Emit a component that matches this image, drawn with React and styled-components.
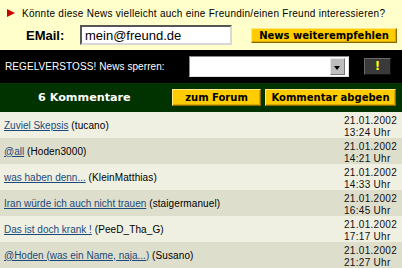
import React from "react";
import styled, { createGlobalStyle } from "styled-components";

const GlobalStyle = createGlobalStyle`
  html, body {
    margin: 0;
    padding: 0;
    background: #efefe2;
  }
  body {
    font-family: "Liberation Sans", Arial, sans-serif;
  }
`;

const comments = [
  { title: "Zuviel Skepsis", author: "tucano", date: "21.01.2002", time: "13:24 Uhr" },
  { title: "@all", author: "Hoden3000", date: "21.01.2002", time: "14:21 Uhr" },
  { title: "was haben denn...", author: "KleinMatthias", date: "21.01.2002", time: "14:33 Uhr" },
  { title: "Iran würde ich auch nicht trauen", author: "staigermanuel", date: "21.01.2002", time: "16:45 Uhr" },
  { title: "Das ist doch krank !", author: "PeeD_Tha_G", date: "21.01.2002", time: "17:17 Uhr" },
  { title: "@Hoden (was ein Name, naja...)", author: "Susano", date: "21.01.2002", time: "21:27 Uhr" },
];

function App() {
  return (
    <>
      <GlobalStyle />
      <Page>
        <Recommend>
          <Question>
            <Arrow />
            Könnte diese News vielleicht auch eine Freundin/einen Freund interessieren?
          </Question>
          <FormRow>
            <Label>EMail:</Label>
            <EmailInput defaultValue="mein@freund.de" />
            <YellowButton $width={146} $height={15}>News weiterempfehlen</YellowButton>
          </FormRow>
        </Recommend>

        <ReportBar>
          <ReportLabel>REGELVERSTOSS! News sperren:</ReportLabel>
          <FakeSelect>
            <SelectArrow />
          </FakeSelect>
          <AlertButton>!</AlertButton>
        </ReportBar>

        <CommentsBar>
          <CommentsTitle>6 Kommentare</CommentsTitle>
          <YellowButton $width={89} $height={17}>zum Forum</YellowButton>
          <YellowButton $width={131} $height={17}>Kommentar abgeben</YellowButton>
        </CommentsBar>

        <List>
          {comments.map((c, i) => (
            <Row key={i} $alt={i % 2 === 1}>
              <RowText>
                <TitleLink href="#">{c.title}</TitleLink> ({c.author})
              </RowText>
              <Stamp>
                <div>{c.date}</div>
                <div>{c.time}</div>
              </Stamp>
            </Row>
          ))}
        </List>
      </Page>
    </>
  );
}

export default App;

const Page = styled.div`
  width: 402px;
  height: 268px;
  overflow: hidden;
`;

const Recommend = styled.section`
  background: #ffffcc;
  height: 50px;
  box-sizing: border-box;
  padding-top: 7px;
`;

const Question = styled.div`
  display: flex;
  align-items: center;
  height: 12px;
  padding-left: 7px;
  font-size: 10px;
  letter-spacing: 0.27px;
  color: #000;
  white-space: nowrap;
`;

const Arrow = styled.span`
  width: 0;
  height: 0;
  border-left: 8px solid #cc0000;
  border-top: 4px solid transparent;
  border-bottom: 4px solid transparent;
  margin-right: 7px;
`;

const FormRow = styled.div`
  display: flex;
  align-items: center;
  height: 20px;
  margin-top: 6px;
  padding-left: 26px;
`;

const Label = styled.span`
  width: 54px;
  font-size: 13px;
  font-weight: bold;
  color: #000;
`;

const EmailInput = styled.input`
  box-sizing: border-box;
  width: 152px;
  height: 20px;
  margin: 0;
  padding: 0 0 0 3px;
  border: 2px solid;
  border-color: #555 #d8d8d8 #d8d8d8 #555;
  background: #fff;
  font-family: "Liberation Sans", Arial, sans-serif;
  font-size: 13px;
  color: #000;
  outline: none;
`;

const YellowButton = styled.button`
  box-sizing: border-box;
  width: ${(p) => p.$width}px;
  height: ${(p) => p.$height}px;
  margin: 0 0 0 19px;
  padding: 0;
  background: #ffcc00;
  border: 1px solid;
  border-color: #ffe680 #8a6a00 #8a6a00 #ffe680;
  box-shadow: inset -1px -1px 0 #d9a800;
  font-family: "DejaVu Sans", Verdana, sans-serif;
  font-size: 10px;
  font-weight: bold;
  color: #000;
  white-space: nowrap;
  cursor: pointer;

  & + & {
    margin-left: 4px;
  }
`;

const ReportBar = styled.div`
  display: flex;
  align-items: center;
  height: 33px;
  background: #000;
  padding-left: 5px;
`;

const ReportLabel = styled.span`
  width: 184px;
  font-size: 10px;
  letter-spacing: 0.08px;
  color: #fff;
  white-space: nowrap;
`;

const FakeSelect = styled.div`
  box-sizing: border-box;
  display: flex;
  justify-content: flex-end;
  align-items: stretch;
  width: 160px;
  height: 21px;
  padding: 1px;
  background: #fff;
  border: 1px solid;
  border-color: #8a8a8a #e0e0e0 #e0e0e0 #8a8a8a;
`;

const SelectArrow = styled.span`
  position: relative;
  width: 15px;
  margin-right: 2px;
  background: #bdbdbd;
  border: 1px solid;
  border-color: #e6e6e6 #777 #777 #e6e6e6;
  box-sizing: border-box;

  &::after {
    content: "";
    position: absolute;
    left: 3px;
    top: 7px;
    border-left: 3.5px solid transparent;
    border-right: 3.5px solid transparent;
    border-top: 4px solid #000;
  }
`;

const AlertButton = styled.button`
  box-sizing: border-box;
  width: 27px;
  height: 17px;
  margin: 0 0 0 15px;
  padding: 0;
  background: #3a3a3a;
  border: 1px solid;
  border-color: #6a6a6a #111 #111 #6a6a6a;
  font-family: "DejaVu Sans", Verdana, sans-serif;
  font-size: 12px;
  font-weight: bold;
  color: #ffff00;
  line-height: 15px;
`;

const CommentsBar = styled.div`
  display: flex;
  align-items: center;
  height: 29px;
  background: #003300;
  padding-left: 38px;
`;

const CommentsTitle = styled.span`
  width: 115px;
  font-family: "DejaVu Sans", Verdana, sans-serif;
  font-size: 11.2px;
  font-weight: bold;
  color: #fff;
  white-space: nowrap;
`;

const List = styled.div`
  display: flex;
  flex-direction: column;
`;

const Row = styled.div`
  display: flex;
  align-items: center;
  height: 26px;
  box-sizing: border-box;
  background: ${(p) => (p.$alt ? "#dedecd" : "#efefe2")};
`;

const RowText = styled.div`
  flex: 1;
  padding-left: 4px;
  font-size: 10px;
  letter-spacing: 0.1px;
  color: #000;
  white-space: nowrap;
`;

const TitleLink = styled.a`
  color: #1b4a7a;
  text-decoration: underline;
  letter-spacing: 0;
`;

const Stamp = styled.div`
  align-self: flex-start;
  width: 58px;
  padding-top: 3px;
  font-size: 10px;
  line-height: 12px;
  letter-spacing: 0.3px;
  color: #111;
`;
